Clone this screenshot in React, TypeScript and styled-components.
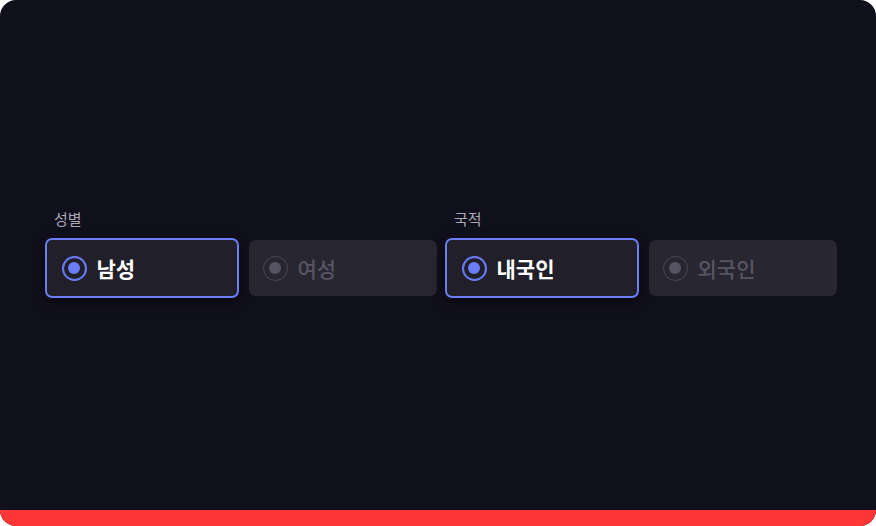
import styled, { createGlobalStyle } from "styled-components";

const GlobalStyle = createGlobalStyle`
  html, body {
    margin: 0;
    padding: 0;
    background: #ffffff;
  }
  body {
    font-family: "Noto Sans CJK KR", "Noto Sans", sans-serif;
  }
`;

const Frame = styled.div`
  width: 876px;
  height: 526px;
  border-radius: 16px;
  overflow: hidden;
  background: #100f1c;
  display: flex;
  flex-direction: column;
`;

const Main = styled.div`
  flex: 1;
  display: flex;
  align-items: center;
  padding: 0 0 0 46px;
`;

const Groups = styled.div`
  display: flex;
  column-gap: 8px;
  margin-top: -5px;
`;

const Group = styled.div`
  width: 392px;
  display: flex;
  flex-direction: column;
`;

const Label = styled.div`
  padding-left: 8px;
  font-size: 15px;
  line-height: 20px;
  color: #a9a8b6;
  margin-bottom: 9px;
`;

const Options = styled.div`
  display: grid;
  grid-template-columns: 191px 191px;
  column-gap: 10px;
  height: 58px;
  align-items: center;
`;

const Option = styled.button<{ $selected?: boolean }>`
  justify-self: center;
  box-sizing: border-box;
  display: flex;
  align-items: center;
  gap: 10px;
  font-family: inherit;
  cursor: pointer;
  border-radius: 7px;
  width: ${(p) => (p.$selected ? "194px" : "188px")};
  height: ${(p) => (p.$selected ? "60px" : "56px")};
  padding: ${(p) => (p.$selected ? "0 0 0 15px" : "0 0 0 14px")};
  background: ${(p) => (p.$selected ? "#201f2a" : "#272631")};
  border: ${(p) => (p.$selected ? "2px solid #6c7cf6" : "none")};
  box-shadow: ${(p) =>
    p.$selected ? "0 4px 14px rgba(0, 0, 0, 0.45)" : "none"};
  color: ${(p) => (p.$selected ? "#ffffff" : "#575563")};
  font-size: 21px;
  font-weight: ${(p) => (p.$selected ? 700 : 500)};
  line-height: 1;
`;

const Radio = styled.span<{ $selected?: boolean }>`
  box-sizing: border-box;
  width: 25px;
  height: 25px;
  border-radius: 50%;
  border: ${(p) =>
    p.$selected ? "2px solid #6c7cf6" : "1.5px solid #4a4856"};
  display: flex;
  align-items: center;
  justify-content: center;
  flex: none;
  &::after {
    content: "";
    width: 12px;
    height: 12px;
    border-radius: 50%;
    background: ${(p) => (p.$selected ? "#6c7cf6" : "#565462")};
  }
`;

const Bar = styled.div`
  height: 16px;
  background: #ff3636;
  flex: none;
`;

type Field = { label: string; options: string[]; selected: number };

const fields: Field[] = [
  { label: "성별", options: ["남성", "여성"], selected: 0 },
  { label: "국적", options: ["내국인", "외국인"], selected: 0 },
];

export default function App() {
  return (
    <>
      <GlobalStyle />
      <Frame>
        <Main>
          <Groups>
            {fields.map((f) => (
              <Group key={f.label}>
                <Label>{f.label}</Label>
                <Options>
                  {f.options.map((o, i) => (
                    <Option key={o} $selected={i === f.selected}>
                      <Radio $selected={i === f.selected} />
                      {o}
                    </Option>
                  ))}
                </Options>
              </Group>
            ))}
          </Groups>
        </Main>
        <Bar />
      </Frame>
    </>
  );
}
